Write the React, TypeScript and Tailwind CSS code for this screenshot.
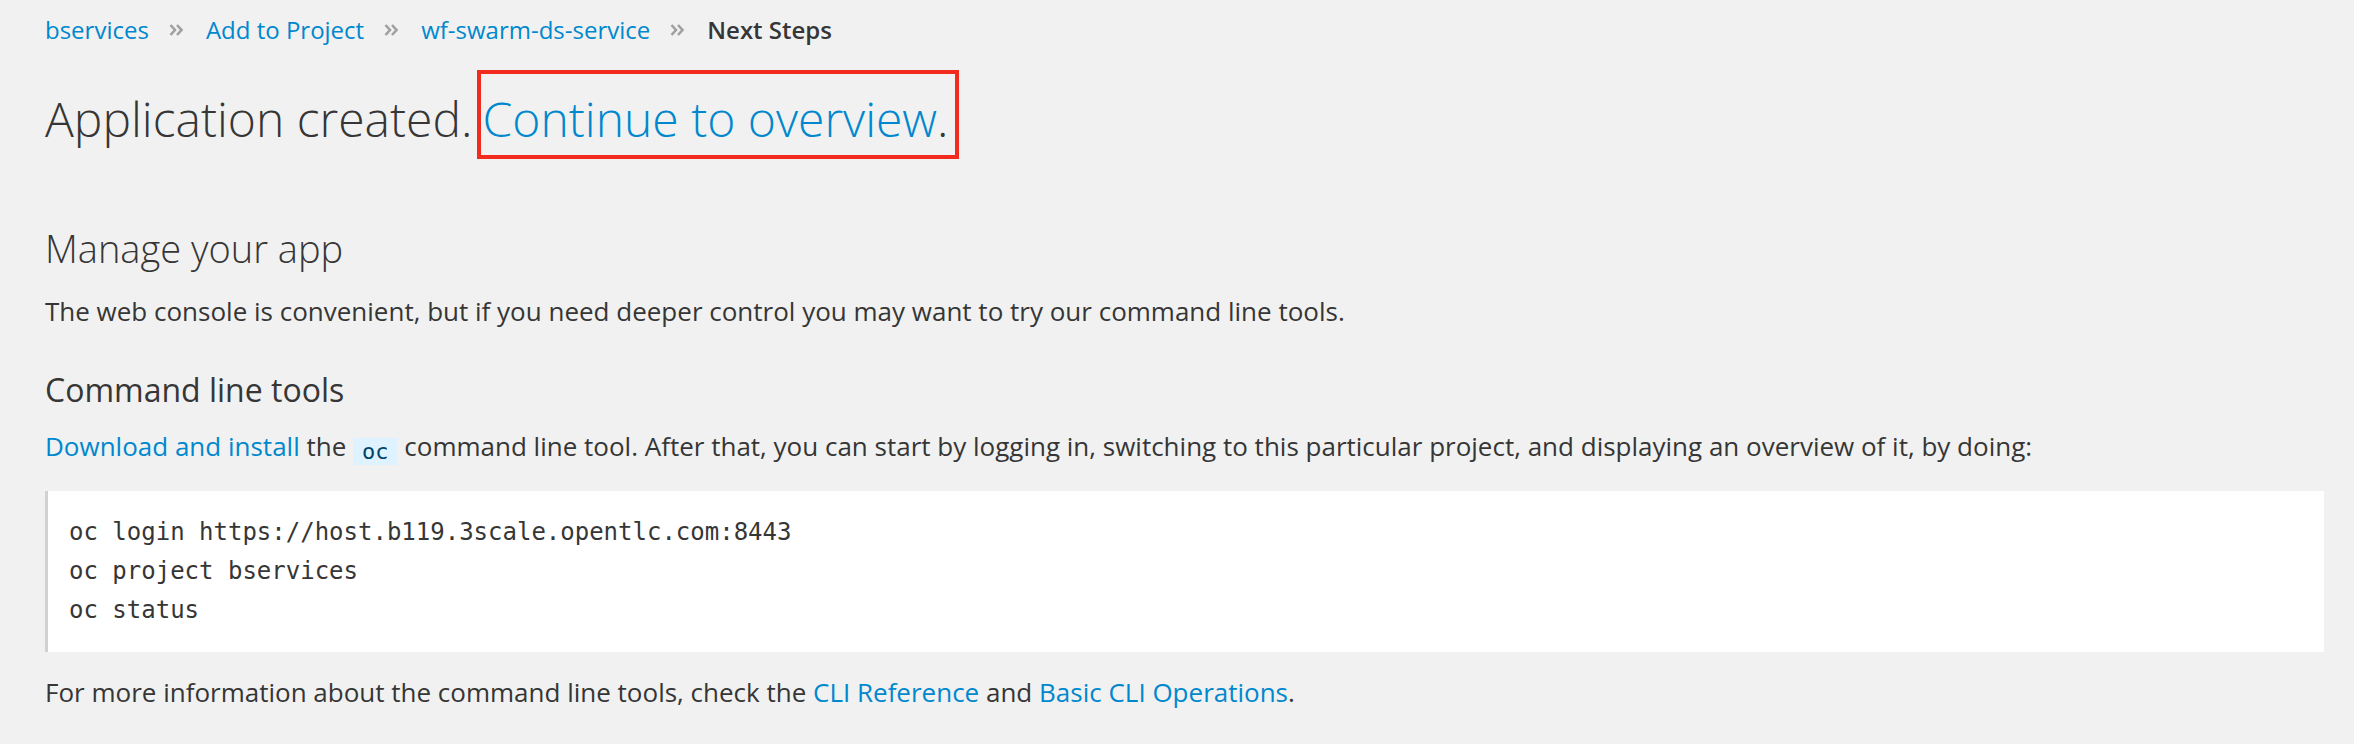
import React from "react";

function Sep() {
  return (
    <svg width="15" height="12" viewBox="0 0 15 12" className="ml-[20px] mr-[22px] shrink-0" aria-hidden="true">
      <path d="M1.5 1 L6 6 L1.5 11" fill="none" stroke="#a0a0a0" strokeWidth="2.6" />
      <path d="M8 1 L12.5 6 L8 11" fill="none" stroke="#a0a0a0" strokeWidth="2.6" />
    </svg>
  );
}

export default function App() {
  return (
    <div className="min-h-[744px] w-full bg-[#f1f1f1] text-[#363636] font-['Open_Sans',sans-serif] pl-[45px] pr-[30px]">
      {/* breadcrumb */}
      <div className="flex items-center pt-[15px] h-[45px] text-[24px] leading-[30px]">
        <a className="text-[#0088ce]">bservices</a>
        <Sep />
        <a className="text-[#0088ce]">Add to Project</a>
        <Sep />
        <a className="text-[#0088ce]">wf-swarm-ds-service</a>
        <Sep />
        <span className="font-semibold text-[#363636]">Next Steps</span>
      </div>

      {/* heading */}
      <h1 className="mt-[25px] flex items-stretch h-[89px] text-[48px] font-light leading-[80px] text-[#363636]">
        <span className="pt-[9px] mr-[5px]">Application created.</span>
        <span className="border-[4px] border-[#f22b1e] pl-[1px] pr-[6px] pt-[5px]">
          <span className="text-[#0088ce]">Continue to overview</span>.
        </span>
      </h1>

      <h2 className="mt-[66px] text-[38px] font-light leading-[46px] text-[#363636]">Manage your app</h2>
      <p className="mt-[22px] text-[26px] leading-[37px]">
        The web console is convenient, but if you need deeper control you may want to try our command line tools.
      </p>

      <h3 className="mt-[40px] text-[32px] font-normal leading-[40px] text-[#363636]">Command line tools</h3>
      <p className="mt-[18px] text-[26px] leading-[37px]">
        <a className="text-[#0088ce]">Download and install</a> the{" "}
        <code className="inline-block bg-[#def3ff] text-[#004368] px-[9px] h-[27px] leading-[27px] text-[22px] font-['DejaVu_Sans_Mono',monospace] align-[-3px]">oc</code>{" "}
        command line tool. After that, you can start by logging in, switching to this particular project, and displaying an overview of it, by doing:
      </p>

      <pre className="mt-[26px] w-[2279px] bg-white border-l-[3px] border-[#d1d1d1] pl-[21px] py-[22px] text-[24px] leading-[39px] text-[#363636] font-['DejaVu_Sans_Mono',monospace]">
        <div>oc login https://host.b119.3scale.opentlc.com:8443</div>
        <div>oc project bservices</div>
        <div>oc status</div>
      </pre>

      <p className="mt-[22px] text-[26px] leading-[37px]">
        For more information about the command line tools, check the <a className="text-[#0088ce]">CLI Reference</a> and{" "}
        <a className="text-[#0088ce]">Basic CLI Operations</a>.
      </p>
    </div>
  );
}
